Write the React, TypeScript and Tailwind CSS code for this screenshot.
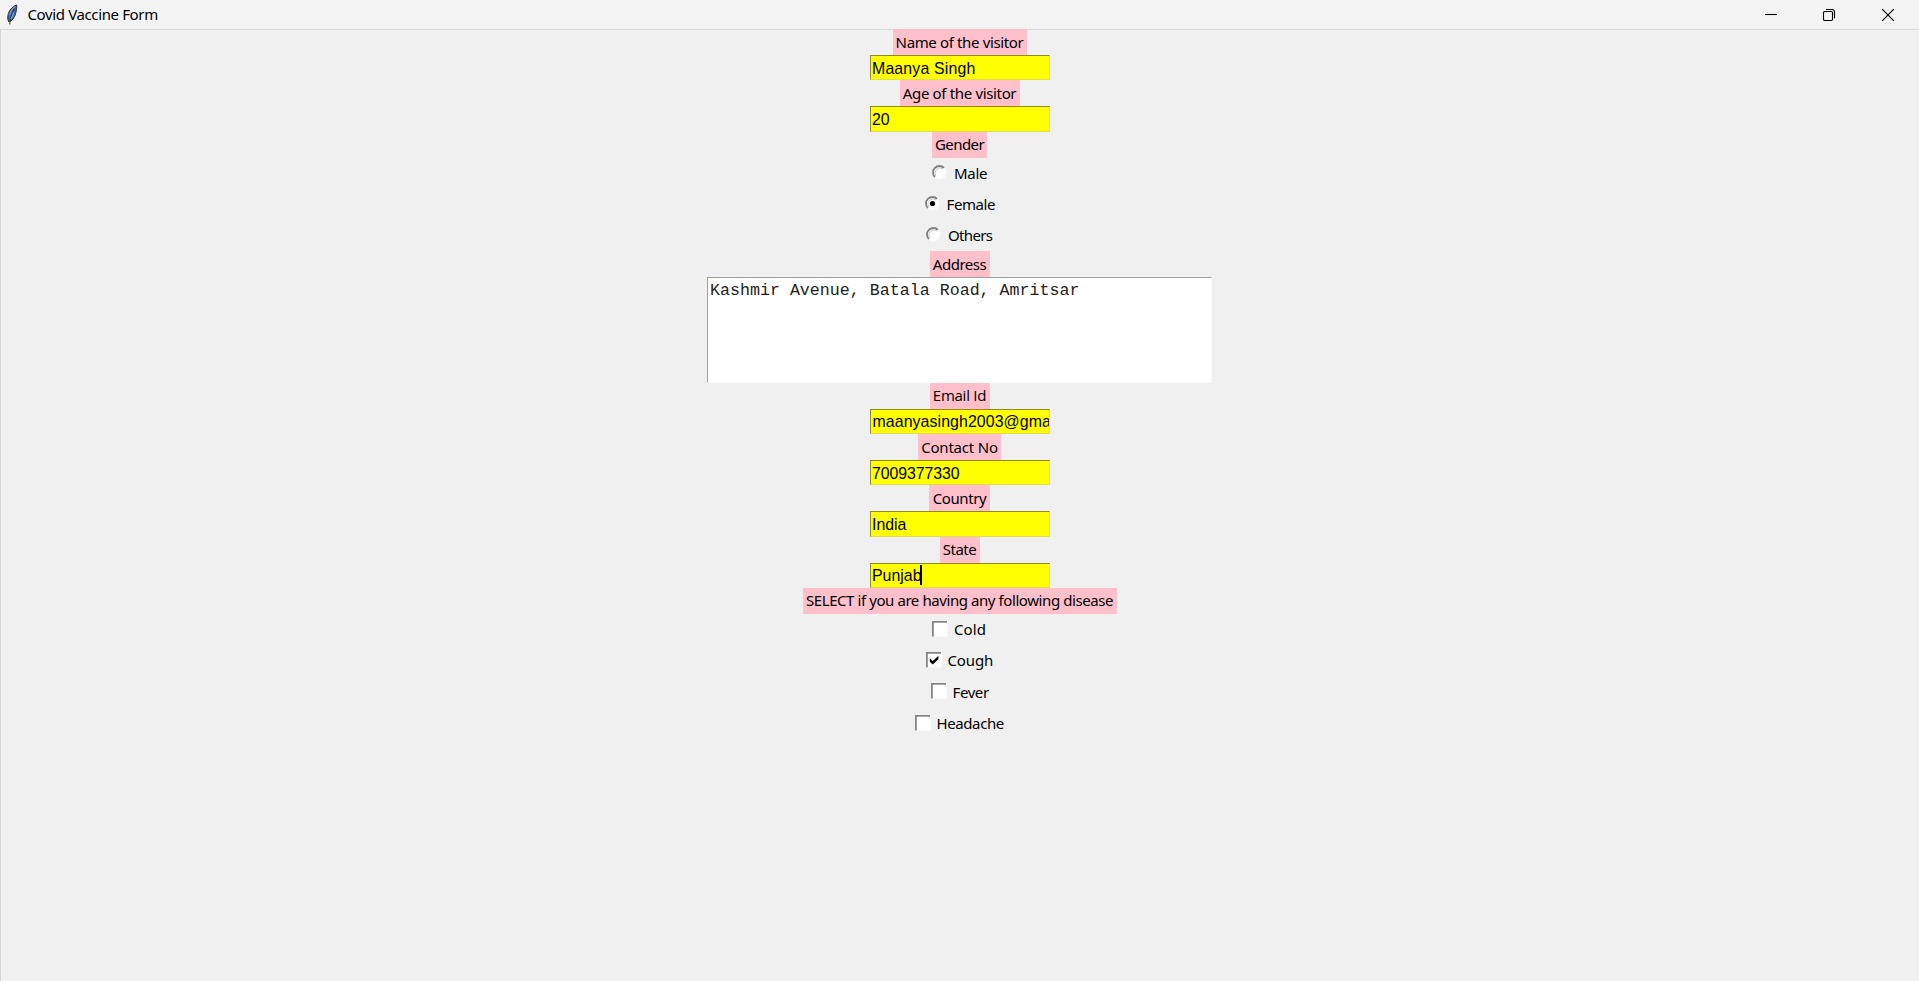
type Item = { text: string; w: string; cls: string };

function Label({ text, w, cls }: Item) {
  return (
    <div className={`flex h-[26px] shrink-0 items-center justify-center bg-[#ffc0cb] ${w}`}>
      <span className={`-mt-[0.9px] whitespace-pre text-[15px] leading-[26px] ${cls}`}>{text}</span>
    </div>
  );
}

function Entry({ value, cls = '', caret = false }: { value: string; cls?: string; caret?: boolean }) {
  return (
    <div className="flex h-[25.3px] w-[180px] shrink-0 items-center overflow-hidden border border-b-[#dede50] border-l-[#8c8c20] border-r-[#e3e35a] border-t-[#8c8c20] bg-[#ffff00] pl-[1.5px] font-['Liberation_Sans',Arial,sans-serif] text-[15.9px] leading-[23px]">
      <span className={`whitespace-pre pt-[1px] ${cls}`}>{value}</span>
      {caret && <span className="h-[20px] w-[2px] shrink-0 bg-black" />}
    </div>
  );
}

function Radio({ text, w, cls, checked = false }: Item & { checked?: boolean }) {
  return (
    <div className={`flex h-[31.3px] shrink-0 items-center ${w}`}>
      <svg className="mr-[7px] mb-[2px] shrink-0" width="15" height="15" viewBox="0 0 15 15" fill="none">
        <circle cx="7.5" cy="7.5" r="6" fill="#fff" />
        <path d="M2.9 12.1A6.4 6.4 0 0 1 12.1 2.9" stroke="#808080" strokeWidth="1.8" />
        <path d="M3.8 11A5.2 5.2 0 0 1 11 3.8" stroke="#b5b5b5" strokeWidth="0.8" />
        <path d="M12.1 2.9A6.5 6.5 0 0 1 2.9 12.1" stroke="#fdfdfd" strokeWidth="1.2" />
        {checked && <circle cx="7.5" cy="7.5" r="2.6" fill="#000" />}
      </svg>
      <span className={`whitespace-pre text-[15px] leading-none ${cls}`}>{text}</span>
    </div>
  );
}

function Check({ text, w, cls, checked = false }: Item & { checked?: boolean }) {
  return (
    <div className={`flex h-[31.3px] shrink-0 items-center ${w}`}>
      <svg className="mr-[6px] mb-[1.4px] shrink-0" width="16" height="16" viewBox="0 0 16 16" fill="none">
        <path d="M0 0H16V16H0Z" fill="#fafafa" />
        <path d="M1 1H14.5V14.5H1Z" fill="#fff" />
        <path d="M0.9 15.5V0.9H15" stroke="#858585" strokeWidth="1.8" />
        {checked && <path d="M3.8 6.2L6.8 9L12.4 3.8V7.3L6.8 12.6L3.8 9.7Z" fill="#000" />}
      </svg>
      <span className={`whitespace-pre text-[15px] leading-none ${cls}`}>{text}</span>
    </div>
  );
}

function Feather() {
  return (
    <svg className="ml-[6px] h-[22px] w-[12px] shrink-0" viewBox="0 0 12 22" fill="none">
      <path d="M10.6 1C7.2 2 3.6 5.6 2.4 9.4C1.5 12.4 1.6 15.4 2.6 17.6L4.6 17.4C8 14.6 9.6 11 10.2 7C10.6 4.6 11 2.6 10.6 1Z" fill="#3f6fb5" stroke="#2a2e36" strokeWidth="1" />
      <path d="M9.2 2.6C6.4 4.4 4.4 7.4 3.6 11" stroke="#9a9fa8" strokeWidth="1.1" />
      <path d="M8.6 4.6C6.6 8 4.8 12 3.9 17V20.6" stroke="#1d2026" strokeWidth="0.9" />
      <path d="M7.6 8.4C6.8 11 6 13 4.9 15" stroke="#6fa0e0" strokeWidth="1.3" />
      <path d="M1.6 13L3.2 17.6" stroke="#4a4c50" strokeWidth="1" />
    </svg>
  );
}

function TitleBar() {
  return (
    <header className="flex h-[29px] shrink-0 items-center bg-[#f3f3f3]">
      <Feather />
      <h1 className="ml-[9.5px] text-[15px] leading-[29px] tracking-[-0.37px]">Covid Vaccine Form</h1>
      <div className="ml-auto flex items-center pr-[24px]">
        <svg className="mr-[44px]" width="14" height="14" viewBox="0 0 14 14" fill="none" stroke="#000">
          <path d="M1 6.5H13" strokeWidth="1.1" />
        </svg>
        <svg className="mr-[45px]" width="14" height="14" viewBox="0 0 14 14" fill="none" stroke="#000" strokeWidth="1.1">
          <rect x="1.5" y="3.5" width="9" height="9" rx="1.2" />
          <path d="M4 1.5H10.2A2.3 2.3 0 0 1 12.5 3.8V10.2" />
        </svg>
        <svg width="14" height="14" viewBox="0 0 14 14" fill="none" stroke="#000" strokeWidth="1.2">
          <path d="M1.2 1.2L12.8 12.8M12.8 1.2L1.2 12.8" />
        </svg>
      </div>
    </header>
  );
}

export default function App() {
  return (
    <div className="flex h-[981px] w-[1919px] flex-col overflow-hidden bg-[#f0f0f0] font-['Noto_Sans','Open_Sans',sans-serif] text-black">
      <TitleBar />
      <main className="flex flex-1 flex-col border-l border-t border-[#d6d6d6]">
        <form className="-mt-px flex flex-col items-center pr-px">
          <Label text="Name of the visitor" w="w-[134px]" cls="tracking-[-0.36px]" />
          <Entry value="Maanya Singh" cls="tracking-[0.15px]" />
          <Label text="Age of the visitor" w="w-[120px]" cls="tracking-[-0.34px]" />
          <Entry value="20" />
          <Label text="Gender" w="w-[55px]" cls="tracking-[-0.55px]" />
          <Radio text="Male" w="w-[55px]" cls="tracking-[-0.3px]" />
          <Radio text="Female" w="w-[70px]" cls="tracking-[-0.4px]" checked />
          <Radio text="Others" w="w-[67px]" cls="tracking-[-0.65px]" />
          <Label text="Address" w="w-[60px]" cls="tracking-[-0.5px]" />
          <div className="h-[105.2px] w-[505px] shrink-0 border border-b-[#fafafa] border-l-[#a0a0a0] border-r-[#fafafa] border-t-[#a0a0a0] bg-white pl-[2px] pt-[2px] font-['Liberation_Mono','Courier_New',monospace] text-[16.65px] leading-[21px] text-[#222]">
            Kashmir Avenue, Batala Road, Amritsar
          </div>
          <Label text="Email Id" w="w-[60px]" cls="font-['Open_Sans',sans-serif] tracking-[-0.25px]" />
          <Entry value="maanyasingh2003@gma" cls="pl-[0.5px] tracking-[0.08px]" />
          <Label text="Contact No" w="w-[83px]" cls="tracking-[-0.2px]" />
          <Entry value="7009377330" cls="tracking-[-0.08px]" />
          <Label text="Country" w="w-[61px]" cls="tracking-[-0.38px]" />
          <Entry value="India" />
          <Label text="State" w="w-[40px]" cls="tracking-[-0.45px]" />
          <Entry value="Punjab" cls="-mr-px" caret />
          <Label text="SELECT if you are having any following disease" w="w-[314px]" cls="tracking-[-0.42px]" />
          <Check text="Cold" w="w-[55px]" cls="tracking-[0.1px]" />
          <Check text="Cough" w="w-[68px]" cls="tracking-[-0.15px]" checked />
          <Check text="Fever" w="w-[58px]" cls="tracking-[-0.4px]" />
          <Check text="Headache" w="w-[90px]" cls="tracking-[-0.4px]" />
        </form>
      </main>
    </div>
  );
}
